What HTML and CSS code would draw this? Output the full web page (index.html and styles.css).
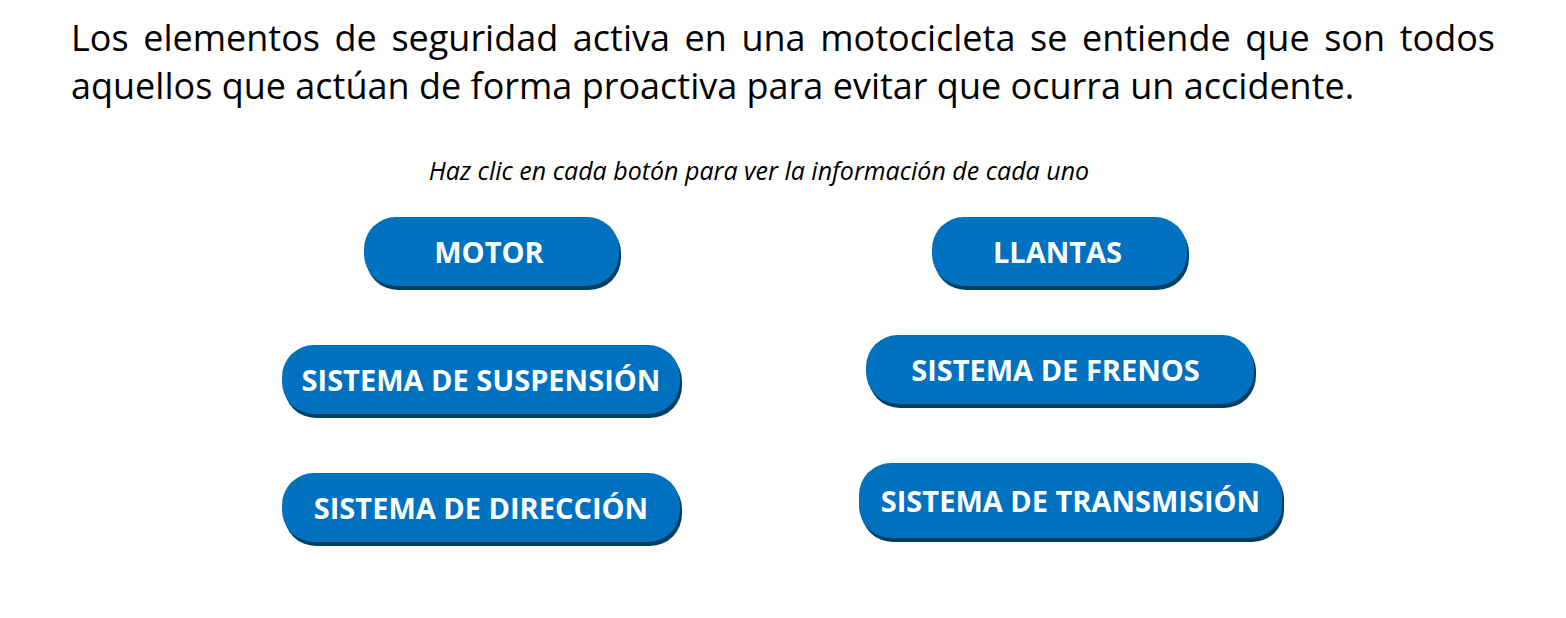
FILE: index.html
```html
<!DOCTYPE html>
<html lang="es">
<head>
<meta charset="utf-8">
<title>Seguridad activa</title>
<link rel="stylesheet" href="styles.css">
</head>
<body>
<main class="page">
  <p class="intro">Los elementos de seguridad activa en una motocicleta se entiende que son todos aquellos que actúan de forma proactiva para evitar que ocurra un accidente.</p>
  <p class="hint">Haz clic en cada botón para ver la información de cada uno</p>
  <div class="topics">
    <div class="column column-left">
      <button class="pill pill-small" type="button">MOTOR</button>
      <button class="pill pill-medium" type="button">SISTEMA DE SUSPENSIÓN</button>
      <button class="pill pill-medium" type="button">SISTEMA DE DIRECCIÓN</button>
    </div>
    <div class="column column-right">
      <button class="pill pill-small" type="button">LLANTAS</button>
      <button class="pill pill-brakes" type="button">SISTEMA DE FRENOS</button>
      <button class="pill pill-large" type="button">SISTEMA DE TRANSMISIÓN</button>
    </div>
  </div>
</main>
</body>
</html>
```

FILE: styles.css
```css
* {
  box-sizing: border-box;
}

body {
  margin: 0;
  background: #fff;
  color: #000;
  font-family: "Open Sans", "Noto Sans", sans-serif;
}

.page {
  padding: 14px 71px 40px;
}

.intro {
  margin: 0;
  font-size: 36px;
  line-height: 48px;
  text-align: justify;
}

.hint {
  margin: 42px 48px 0 0;
  font-size: 25px;
  line-height: 36px;
  font-style: italic;
  text-align: center;
}

.topics {
  display: flex;
  justify-content: center;
  gap: 179px;
  margin: 29px 2px 0 0;
}

.column {
  display: flex;
  flex-direction: column;
  align-items: center;
}

.column-left {
  gap: 59px;
}

.column-right {
  gap: 49px;
}

.pill {
  height: 69px;
  padding: 0;
  border: 0;
  border-radius: 32px;
  background: #0071bf;
  box-shadow: 2px 4px 0 #003f60;
  color: #fff;
  font: 700 29px/36px "Open Sans", "Noto Sans", sans-serif;
  white-space: nowrap;
  cursor: pointer;
}

.pill-small {
  width: 255px;
  padding-right: 4px;
}

.column-left .pill-small {
  margin-left: 20px;
}

.column-right .pill-small,
.pill-brakes {
  margin-right: 22px;
}

.pill-medium {
  width: 398px;
}

.pill-brakes {
  width: 388px;
  padding-right: 8px;
}

.pill-large {
  width: 423px;
  height: 75px;
  margin-top: 10px;
}
```
